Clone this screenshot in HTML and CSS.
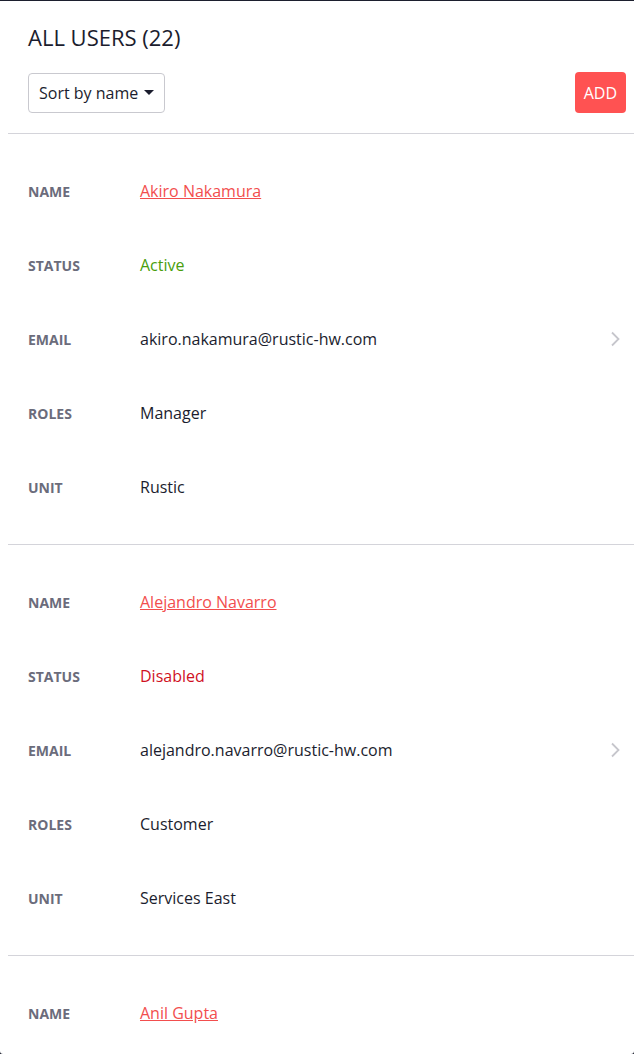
FILE: index.html
```html
<!DOCTYPE html>
<html>
<head>
<meta charset="utf-8">
<link rel="stylesheet" href="styles.css">
</head>
<body>
<div class="page">
  <header class="header">
    <h1 class="title">ALL USERS (22)</h1>
    <div class="toolbar">
      <button class="sort">Sort by name <span class="caret"></span></button>
      <button class="add">ADD</button>
    </div>
  </header>
  <div class="list">
    <div class="card">
      <div class="rows">
        <div class="row"><span class="label">NAME</span><a class="name" href="#">Akiro Nakamura</a></div>
        <div class="row"><span class="label">STATUS</span><span class="value active">Active</span></div>
        <div class="row"><span class="label">EMAIL</span><span class="value">akiro.nakamura@rustic-hw.com</span></div>
        <div class="row"><span class="label">ROLES</span><span class="value">Manager</span></div>
        <div class="row"><span class="label">UNIT</span><span class="value">Rustic</span></div>
      </div>
      <svg class="chev" width="10" height="16" viewBox="0 0 10 16"><polyline points="2,1.5 8.5,8 2,14.5" fill="none" stroke="#c6c6cc" stroke-width="1.8"/></svg>
    </div>
    <div class="card">
      <div class="rows">
        <div class="row"><span class="label">NAME</span><a class="name" href="#">Alejandro Navarro</a></div>
        <div class="row"><span class="label">STATUS</span><span class="value disabled">Disabled</span></div>
        <div class="row"><span class="label">EMAIL</span><span class="value">alejandro.navarro@rustic-hw.com</span></div>
        <div class="row"><span class="label">ROLES</span><span class="value">Customer</span></div>
        <div class="row"><span class="label">UNIT</span><span class="value">Services East</span></div>
      </div>
      <svg class="chev" width="10" height="16" viewBox="0 0 10 16"><polyline points="2,1.5 8.5,8 2,14.5" fill="none" stroke="#c6c6cc" stroke-width="1.8"/></svg>
    </div>
    <div class="card">
      <div class="rows">
        <div class="row"><span class="label">NAME</span><a class="name" href="#">Anil Gupta</a></div>
      </div>
    </div>
  </div>
</div>
</body>
</html>
```
FILE: styles.css
```css
html, body {
  margin: 0;
  padding: 0;
  background: #1c1f2e;
}
body {
  font-family: "Open Sans", "Liberation Sans", sans-serif;
  color: #1a1c2b;
  height: 1054px;
  overflow: hidden;
}
.page {
  margin-top: 1px;
  background: #fff;
  border-radius: 0 0 3px 3px;
  height: 1053px;
  overflow: hidden;
  padding-left: 8px;
}
.header {
  padding: 22px 8px 20px 20px;
  border-bottom: 1px solid #d4d4da;
}
.title {
  margin: 0;
  font-size: 22px;
  font-weight: 400;
  line-height: 28px;
  color: #1b1d2e;
}
.toolbar {
  margin-top: 21px;
  display: flex;
  justify-content: space-between;
  align-items: center;
}
.sort {
  font-family: inherit;
  font-size: 16px;
  color: #1b1d2e;
  background: #fff;
  border: 1px solid #c9c9cf;
  border-radius: 4px;
  height: 40px;
  padding: 0 10px;
  display: flex;
  align-items: center;
  gap: 6px;
}
.caret {
  width: 0;
  height: 0;
  border-left: 5px solid transparent;
  border-right: 5px solid transparent;
  border-top: 5px solid #1b1d2e;
}
.add {
  font-family: inherit;
  font-size: 16px;
  color: #fff;
  background: #ff5252;
  border: none;
  border-radius: 4px;
  height: 41px;
  padding: 0 9px;
}
.card {
  display: flex;
  align-items: center;
  padding: 20px 14px 20px 20px;
  border-bottom: 1px solid #d4d4da;
}
.rows {
  flex: 1;
}
.row {
  height: 74px;
  display: flex;
  align-items: center;
}
.label {
  width: 112px;
  font-size: 14px;
  font-weight: 700;
  color: #6b6c7b;
}
.value, .name {
  font-size: 16px;
  color: #1b1d2e;
}
.name {
  color: #f24e4e;
  text-decoration: underline;
}
.active { color: #4a9e0c; }
.disabled { color: #d0111f; }
.chev {
  display: block;
}
```
